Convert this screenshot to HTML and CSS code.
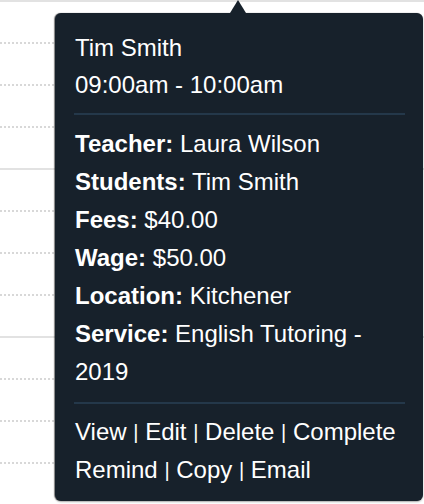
FILE: index.html
```html
<!DOCTYPE html>
<html lang="en">
<head>
<meta charset="utf-8">
<title>Lesson tooltip</title>
<link rel="stylesheet" href="styles.css">
</head>
<body>
<div class="calendar">
  <div class="slot hour"></div>
  <div class="slot"></div>
  <div class="slot"></div>
  <div class="slot"></div>
  <div class="slot hour"></div>
  <div class="slot"></div>
  <div class="slot"></div>
  <div class="slot"></div>
  <div class="slot hour"></div>
  <div class="slot"></div>
  <div class="slot"></div>
  <div class="slot"></div>
</div>

<div class="tooltip">
  <span class="arrow"></span>
  <div class="head">
    <div>Tim Smith</div>
    <div>09:00am - 10:00am</div>
  </div>
  <hr class="sep">
  <div class="details">
    <div><b>Teacher:</b> Laura Wilson</div>
    <div><b>Students:</b> Tim Smith</div>
    <div><b>Fees:</b> $40.00</div>
    <div><b>Wage:</b> $50.00</div>
    <div><b>Location:</b> Kitchener</div>
    <div><b>Service:</b> English Tutoring - 2019</div>
  </div>
  <hr class="sep sep2">
  <div class="actions">
    <a href="#">View</a> <span class="bar">|</span> <a href="#">Edit</a> <span class="bar">|</span> <a href="#">Delete</a> <span class="bar">|</span> <a href="#">Complete</a>
    <a href="#">Remind</a> <span class="bar">|</span> <a href="#">Copy</a> <span class="bar">|</span> <a href="#">Email</a>
  </div>
</div>
</body>
</html>
```

FILE: styles.css
```css
* { box-sizing: border-box; }

html, body {
  margin: 0;
  padding: 0;
  background: #ffffff;
  width: 424px;
  height: 504px;
  overflow: hidden;
  font-family: "Liberation Sans", Arial, Helvetica, sans-serif;
}

.calendar {
  display: flex;
  flex-direction: column;
}

.slot {
  height: 42px;
  flex: none;
  background-image: repeating-linear-gradient(to right, #d8d8d8 0 2px, transparent 2px 4px);
  background-size: 100% 2px;
  background-repeat: no-repeat;
  background-position: 0 0;
}

.slot.hour {
  background-image: linear-gradient(#e2e2e2, #e2e2e2);
}

.tooltip {
  position: absolute;
  left: 55px;
  top: 13px;
  width: 368px;
  padding: 16px 18px 12px 20px;
  background: #17212b;
  color: #ffffff;
  border-radius: 6px;
  box-shadow: -1px 0 1px rgba(0, 0, 0, 0.45), 0 1px 2px rgba(0, 0, 0, 0.3);
  font-size: 24px;
}

.arrow {
  position: absolute;
  top: -13px;
  left: 175px;
  width: 0;
  height: 0;
  border-left: 8px solid transparent;
  border-right: 8px solid transparent;
  border-bottom: 13px solid #17212b;
}

.head {
  line-height: 37px;
}

.sep {
  border: 0;
  height: 2px;
  background: #24384a;
  margin: 10px 0 10px -1px;
}

.sep2 {
  margin: 11px 0 9px -1px;
}

.details {
  line-height: 38px;
}

.details b {
  font-weight: 700;
}

.actions {
  line-height: 37px;
}

.actions a {
  color: #ffffff;
  text-decoration: none;
}

.bar {
  display: inline-block;
  font-size: 20px;
  vertical-align: 1px;
}
```
